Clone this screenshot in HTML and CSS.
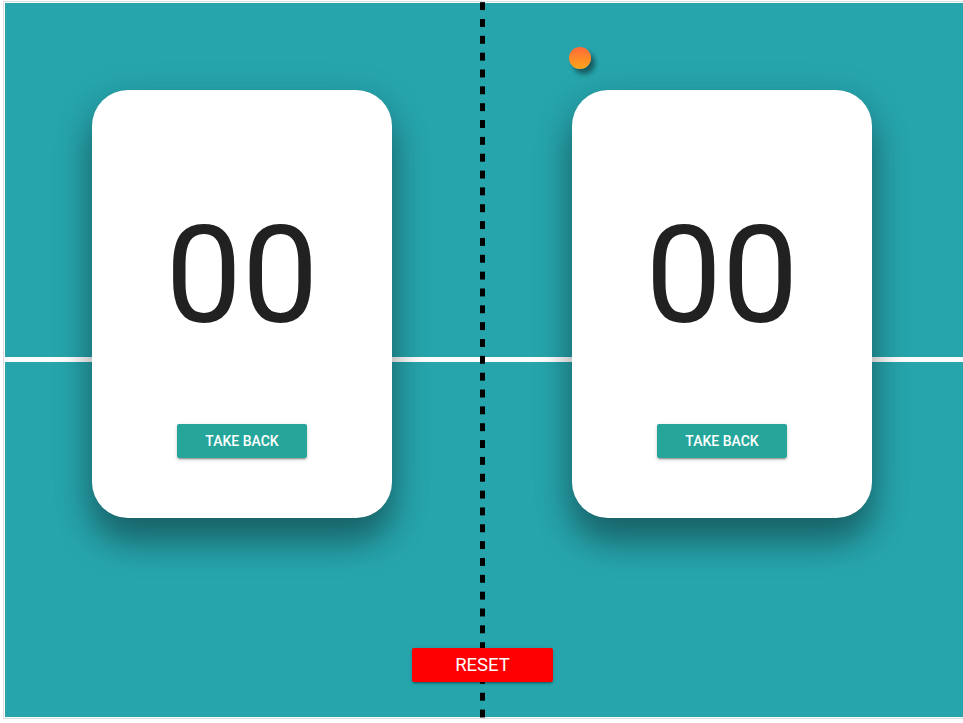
FILE: index.html
```
<!DOCTYPE html>
<html>
<head>
<meta charset="utf-8">
<title>Ping Pong Score</title>
<link rel="stylesheet" href="styles.css">
</head>
<body>
<div class="frame">
  <div class="table">
    <div class="sides">
      <div class="side">
        <div class="card">
          <div class="score">00</div>
          <button class="btn take-back">Take back</button>
        </div>
      </div>
      <div class="side">
        <div class="card">
          <div class="score">00</div>
          <button class="btn take-back">Take back</button>
        </div>
      </div>
    </div>
    <div class="controls">
      <button class="btn reset">Reset</button>
    </div>
  </div>
</div>
<div class="net"></div>
<div class="ball"></div>
</body>
</html>
```
FILE: styles.css
```
html, body {
  margin: 0;
  padding: 0;
  overflow: hidden;
  background: #fff;
  height: 723px;
}
body {
  font-family: Roboto, "Noto Sans", sans-serif;
}
.frame {
  margin: 1px 0 0 3px;
  width: 964px;
  border: 1px solid #dedede;
  padding: 1px;
  background: #fff;
}
.table {
  height: 714px;
  background-color: #27a5ad;
  background-image: linear-gradient(to bottom, transparent 354.5px, #fff 354.5px, #fff 359px, transparent 359px);
  display: flex;
  flex-direction: column;
}
.sides {
  display: grid;
  grid-template-columns: 478px 480px;
  padding-top: 87px;
}
.side {
  display: flex;
  justify-content: center;
}
.side:first-child { padding-right: 4px; }
.side:last-child { padding-right: 2px; }
.card {
  width: 300px;
  height: 428px;
  background: #fff;
  border-radius: 36px;
  box-shadow: 0 24px 34px rgba(0,0,0,0.34), 0 10px 44px rgba(0,0,0,0.14);
  display: flex;
  flex-direction: column;
  align-items: center;
  position: relative;
  z-index: 1;
}
.score {
  margin-top: 117.5px;
  font-size: 136px;
  line-height: 136px;
  font-weight: 400;
  color: #212121;
}
.btn {
  border: none;
  color: #fff;
  font-family: Roboto, "Noto Sans", sans-serif;
  text-transform: uppercase;
  border-radius: 2px;
  box-shadow: 0 2px 2px 0 rgba(0,0,0,0.14), 0 1px 5px 0 rgba(0,0,0,0.12), 0 3px 1px -2px rgba(0,0,0,0.2);
  cursor: pointer;
  padding: 0;
}
.take-back {
  margin-top: 80.5px;
  width: 130px;
  height: 34px;
  background: #26a69a;
  font-size: 14px;
  font-weight: 500;
}
.controls {
  display: flex;
  justify-content: center;
  padding-top: 130px;
  padding-right: 9px;
}
.reset {
  width: 141px;
  height: 34px;
  background: #ff0000;
  font-size: 18.5px;
  font-weight: 400;
  position: relative;
  z-index: 3;
}
.net {
  position: absolute;
  left: 480px;
  top: 0;
  width: 5px;
  height: 723px;
  background-image: linear-gradient(to bottom, #000 0, #000 8px, transparent 8px);
  background-size: 5px 16.85px;
  background-position: 0 2.15px;
  z-index: 2;
}
.ball {
  position: absolute;
  left: 569px;
  top: 47px;
  width: 22px;
  height: 22px;
  border-radius: 50%;
  background: linear-gradient(to bottom, #ff6a38, #ffa51a);
  box-shadow: 4px 5px 5px rgba(0,0,0,0.45);
  z-index: 2;
}
```
